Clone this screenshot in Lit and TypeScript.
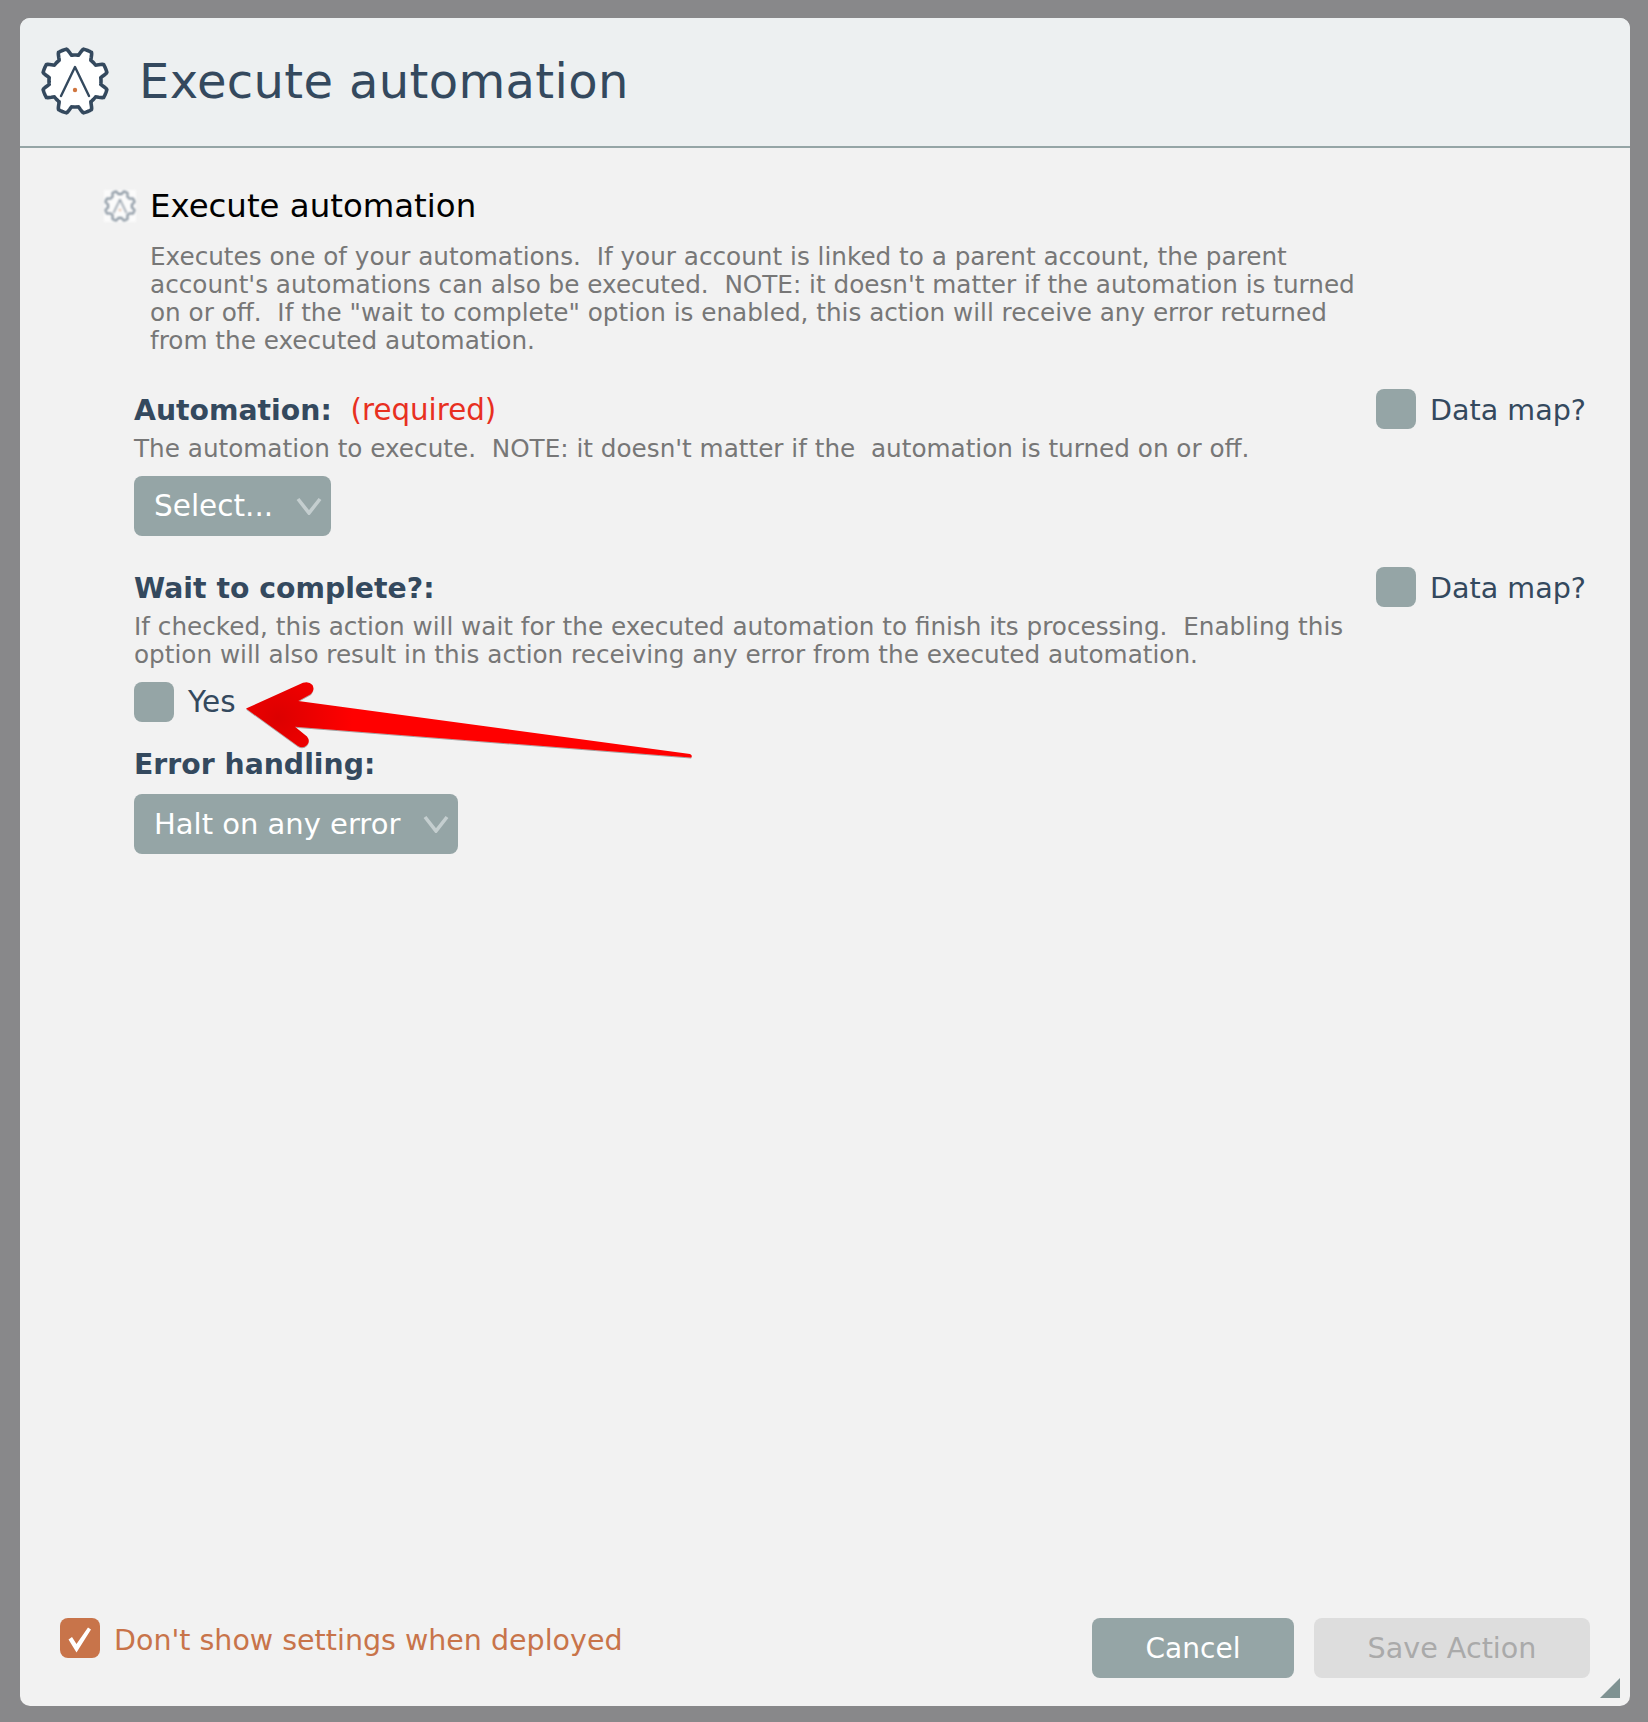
import { LitElement, html, css, svg } from "lit";
import { customElement } from "lit/decorators.js";

// gear outline with eight rounded teeth, a notch sits at the top
function gearPath(cx: number, cy: number, inner: number, outer: number) {
  const pts: string[] = [];
  for (let i = 0; i < 240; i++) {
    const a = (i / 240) * Math.PI * 2;
    const wave = -Math.cos(8 * a);
    const t = Math.max(-1, Math.min(1, wave * 2.2));
    const r = inner + ((outer - inner) * (t + 1)) / 2;
    const x = cx + r * Math.sin(a);
    const y = cy - r * Math.cos(a);
    pts.push(`${x.toFixed(2)} ${y.toFixed(2)}`);
  }
  return "M" + pts.join("L") + "Z";
}

const gear = svg`
  <path d=${gearPath(35, 35, 26, 33)} fill="#fff" stroke="#34495e" stroke-width="3.6" stroke-linejoin="round" />
  <path d="M21 50 L35 21 L49 50" fill="none" stroke="#34495e" stroke-width="2.4" stroke-linecap="round" stroke-linejoin="round" />
  <circle cx="35" cy="44" r="2.2" fill="#d0763f" />
`;

@customElement("app-root")
export class AppRoot extends LitElement {
  static styles = css`
    :host {
      display: block;
      height: 1722px;
      box-sizing: border-box;
      padding: 18px 18px 16px 20px;
      background: #88888a;
      font-family: "DejaVu Sans", Verdana, sans-serif;
      position: relative;
    }
    .dialog {
      height: 100%;
      display: flex;
      flex-direction: column;
      background: #f2f2f2;
      border-radius: 10px;
      overflow: hidden;
      position: relative;
    }
    .head {
      height: 130px;
      flex: none;
      box-sizing: border-box;
      display: flex;
      align-items: center;
      gap: 29px;
      padding: 0 0 2px 20px;
      background: #edf0f1;
      border-bottom: 2px solid #95a5a6;
    }
    .head svg {
      width: 70px;
      height: 70px;
      flex: none;
    }
    .head h1 {
      margin: 0;
      font-size: 48px;
      font-weight: 400;
      color: #34495e;
      letter-spacing: 0.35px;
    }
    .body {
      flex: 1;
      padding: 42px 44px 0 84px;
    }
    .sub {
      display: flex;
      align-items: center;
      gap: 14px;
      height: 32px;
    }
    .sub .logo {
      width: 32px;
      height: 32px;
      background: #fff;
      flex: none;
      opacity: 0.72;
      filter: blur(0.8px);
    }
    .sub h2 {
      margin: 0;
      font-size: 32.4px;
      font-weight: 400;
      color: #000;
    }
    .desc {
      margin: 21px 0 0 46px;
      font-size: 24.7px;
      line-height: 28px;
      color: #777;
      white-space: pre-wrap;
    }
    .field {
      margin-left: 30px;
    }
    .row {
      display: flex;
      justify-content: space-between;
      align-items: center;
      height: 40px;
    }
    .row .label,
    .row .txt {
      padding-top: 2px;
    }
    .label {
      font-size: 28.3px;
      font-weight: 700;
      color: #34495e;
    }
    .req {
      font-size: 29.3px;
      font-weight: 400;
      color: #e8301f;
      margin-left: 9px;
    }
    .help {
      margin: 6px 0 0;
      font-size: 24.7px;
      line-height: 28px;
      color: #777;
      white-space: pre-wrap;
    }
    .check {
      display: flex;
      align-items: center;
      gap: 14px;
      font-size: 28.6px;
      color: #34495e;
    }
    .box {
      width: 40px;
      height: 40px;
      border-radius: 8px;
      background: #95a5a6;
      flex: none;
    }
    .select {
      display: inline-flex;
      align-items: center;
      justify-content: space-between;
      box-sizing: border-box;
      height: 60px;
      padding: 0 9px 0 20px;
      gap: 23px;
      border-radius: 8px;
      background: #95a5a6;
      color: #fff;
      font-size: 29px;
    }
    .select .wide {
      font-size: 29.5px;
    }
    .select svg {
      width: 26px;
      height: 18px;
      flex: none;
    }
    .first {
      margin-top: 34px;
    }
    .second {
      margin-top: 31px;
    }
    .third {
      margin-top: 26px;
    }
    .pick {
      margin-top: 13px;
    }
    .yes {
      margin-top: 13px;
      font-size: 29.5px;
    }
    .foot {
      flex: none;
      display: flex;
      justify-content: space-between;
      align-items: flex-start;
      padding: 0 40px 28px 40px;
    }
    .foot .check {
      color: #c8744a;
      height: 40px;
      font-size: 28.5px;
    }
    .foot .check span.txt {
      padding-top: 4px;
    }
    .foot .box {
      background: #c8744a;
    }
    .foot .box svg {
      display: block;
    }
    .btns {
      display: flex;
      gap: 20px;
    }
    .btn {
      height: 60px;
      box-sizing: border-box;
      display: flex;
      align-items: center;
      justify-content: center;
      border-radius: 8px;
      font-size: 28px;
      background: #95a5a6;
      color: #fff;
    }
    .cancel {
      width: 202px;
    }
    .save {
      width: 276px;
      background: #dddddd;
      color: #aaaaaa;
      font-size: 28.6px;
    }
    .grip {
      position: absolute;
      right: 10px;
      bottom: 8px;
      width: 20px;
      height: 20px;
      background: #7f9292;
      clip-path: polygon(100% 0, 100% 100%, 0 100%);
    }
    .arrow {
      position: absolute;
      left: 240px;
      top: 676px;
      width: 460px;
      height: 80px;
      overflow: visible;
    }
  `;

  private chevron() {
    return html`<svg viewBox="0 0 26 18">
      <path d="M2 2 L13 16 L24 2" fill="none" stroke="#c4cecf" stroke-width="3.6" />
    </svg>`;
  }

  render() {
    return html`
      <div class="dialog">
        <header class="head">
          <svg viewBox="0 0 70 70">${gear}</svg>
          <h1>Execute automation</h1>
        </header>

        <main class="body">
          <div class="sub">
            <svg class="logo" viewBox="0 0 70 70">${gear}</svg>
            <h2>Execute automation</h2>
          </div>
          <p class="desc">Executes one of your automations.  If your account is linked to a parent account, the parent
account's automations can also be executed.  NOTE: it doesn't matter if the automation is turned
on or off.  If the "wait to complete" option is enabled, this action will receive any error returned
from the executed automation.</p>

          <section class="field first">
            <div class="row">
              <span class="label">Automation: <span class="req">(required)</span></span>
              <label class="check"><span class="box"></span><span class="txt">Data map?</span></label>
            </div>
            <p class="help">The automation to execute.  NOTE: it doesn't matter if the  automation is turned on or off.</p>
            <div class="select pick"><span class="wide">Select...</span>${this.chevron()}</div>
          </section>

          <section class="field second">
            <div class="row">
              <span class="label">Wait to complete?:</span>
              <label class="check"><span class="box"></span><span class="txt">Data map?</span></label>
            </div>
            <p class="help">If checked, this action will wait for the executed automation to finish its processing.  Enabling this
option will also result in this action receiving any error from the executed automation.</p>
            <label class="check yes"><span class="box"></span>Yes</label>
          </section>

          <section class="field third">
            <div class="label">Error handling:</div>
            <div class="select pick"><span>Halt on any error</span>${this.chevron()}</div>
          </section>
        </main>

        <footer class="foot">
          <label class="check">
            <span class="box">
              <svg width="40" height="40" viewBox="0 0 40 40">
                <path d="M8.5 21.5 L12 19 L16.5 26 L28 9.5 L31 11.5 L16.5 34.5 Z" fill="#fff" />
              </svg>
            </span>
            <span class="txt">Don't show settings when deployed</span>
          </label>
          <div class="btns">
            <div class="btn cancel">Cancel</div>
            <div class="btn save">Save Action</div>
          </div>
        </footer>
        <div class="grip"></div>
      </div>

      <svg class="arrow" viewBox="240 676 460 80">
        <defs>
          <radialGradient id="red" gradientUnits="userSpaceOnUse" cx="278" cy="718" r="75">
            <stop offset="0" stop-color="#dc0000" />
            <stop offset="1" stop-color="#ff0000" />
          </radialGradient>
          <filter id="sh" x="-5%" y="-20%" width="110%" height="150%">
            <feDropShadow dx="0" dy="1" stdDeviation="0.6" flood-color="#000" flood-opacity="0.35" />
          </filter>
        </defs>
        <path
          d="M246 708.5 L303 682.8 Q309 681 312.5 685 Q315 690 311 694 L298.3 701 L690 754 Q693 755.5 691 757.5 L295 726.7 L307 736.5 Q310.5 741 307 745 Q303 749 298 746 Z"
          fill="url(#red)"
          filter="url(#sh)"
        />
      </svg>
    `;
  }
}
